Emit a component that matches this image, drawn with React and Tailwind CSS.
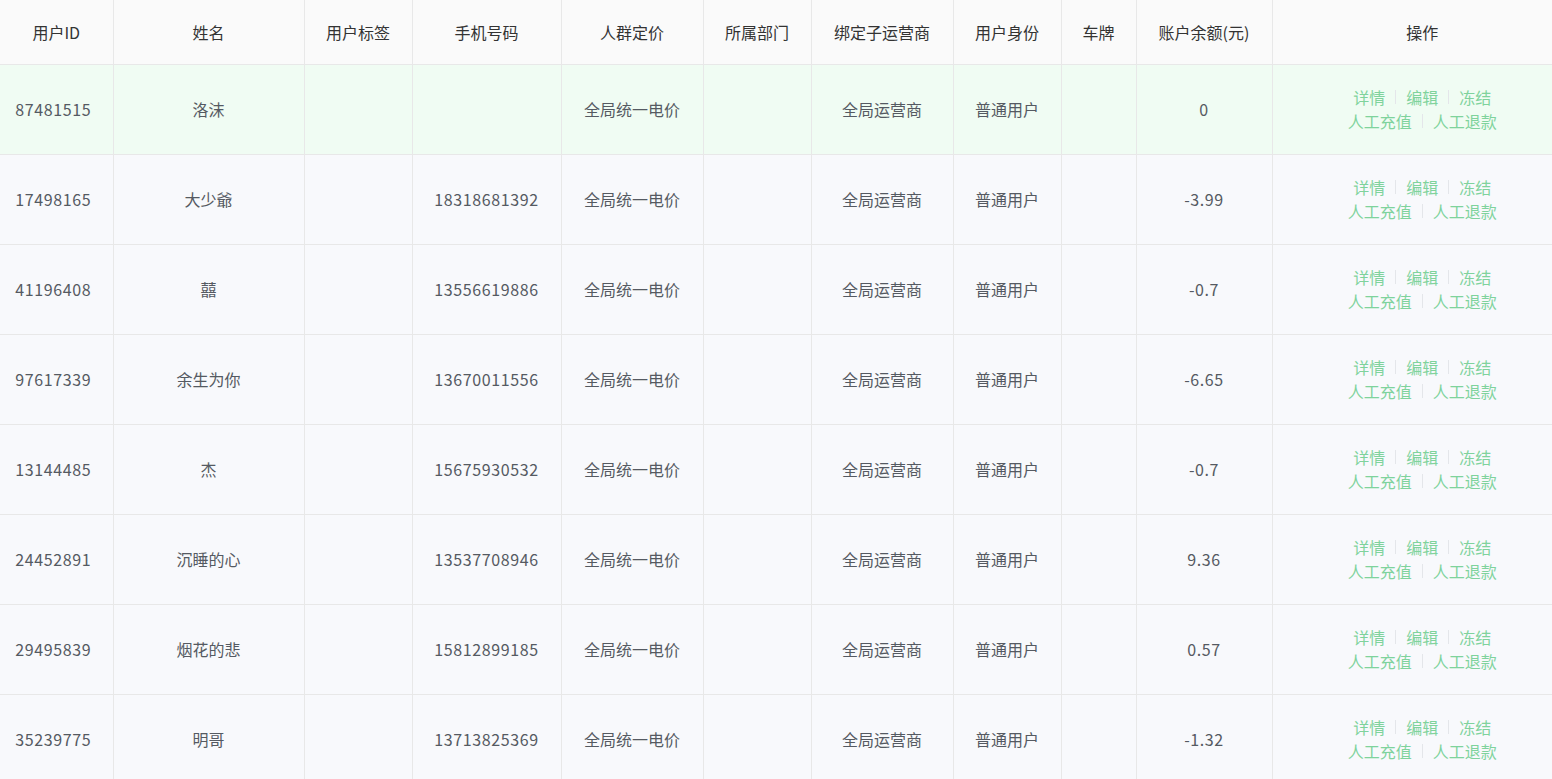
import React from "react";

const cols = [113, 191, 108, 149, 142, 108, 142, 108, 75, 136, 280];
const headers = ["用户ID", "姓名", "用户标签", "手机号码", "人群定价", "所属部门", "绑定子运营商", "用户身份", "车牌", "账户余额(元)", "操作"];
const rows = [
  ["87481515", "洛沫", "", "", "0"],
  ["17498165", "大少爺", "", "18318681392", "-3.99"],
  ["41196408", "囍", "", "13556619886", "-0.7"],
  ["97617339", "余生为你", "", "13670011556", "-6.65"],
  ["13144485", "杰", "", "15675930532", "-0.7"],
  ["24452891", "沉睡的心", "", "13537708946", "9.36"],
  ["29495839", "烟花的悲", "", "15812899185", "0.57"],
  ["35239775", "明哥", "", "13713825369", "-1.32"],
];

function Sep() {
  return <span className="inline-block w-px h-[14px] bg-[#e4e6ea] mx-[10px] align-middle" />;
}

function Actions() {
  return (
    <div className="flex flex-col items-center text-[#7fd39c] leading-[24px]">
      <div className="flex items-center">
        <span>详情</span><Sep /><span>编辑</span><Sep /><span>冻结</span>
      </div>
      <div className="flex items-center">
        <span>人工充值</span><Sep /><span>人工退款</span>
      </div>
    </div>
  );
}

export default function App() {
  return (
    <div className="w-[1552px] h-[779px] overflow-hidden bg-[#f8f9fc]" style={{ fontFamily: '"Noto Sans CJK SC", "Noto Sans", sans-serif' }}>
      <table className="table-fixed border-collapse w-[1552px] text-[16px]">
        <colgroup>
          {cols.map((w, i) => <col key={i} style={{ width: w }} />)}
        </colgroup>
        <thead>
          <tr className="h-[64px] bg-[#fafafa]">
            {headers.map((h, i) => (
              <th key={i} className={`font-normal text-[#333333] text-center border-b border-[#e8e8e8] p-0 ${i < headers.length - 1 ? "border-r" : "pl-[20px]"}`}>{h}</th>
            ))}
          </tr>
        </thead>
        <tbody>
          {rows.map((r, ri) => {
            const cells = [r[0], r[1], r[2], r[3], "全局统一电价", "", "全局运营商", "普通用户", "", r[4]];
            return (
              <tr key={ri} className={`h-[90px] ${ri === 0 ? "bg-[#f0fcf3]" : "bg-[#f8f9fc]"}`}>
                {cells.map((c, ci) => (
                  <td key={ci} className={`text-center text-[#555a62] border-b border-r border-[#e8e8e8] p-0 ${ci === 0 ? "pr-[6px]" : ""} ${ci === 0 || ci === 3 || ci === 9 ? "tracking-[0.6px]" : ""}`}>{c}</td>
                ))}
                <td className="text-center border-b border-[#e8e8e8] p-0 pl-[20px]"><Actions /></td>
              </tr>
            );
          })}
        </tbody>
      </table>
    </div>
  );
}
